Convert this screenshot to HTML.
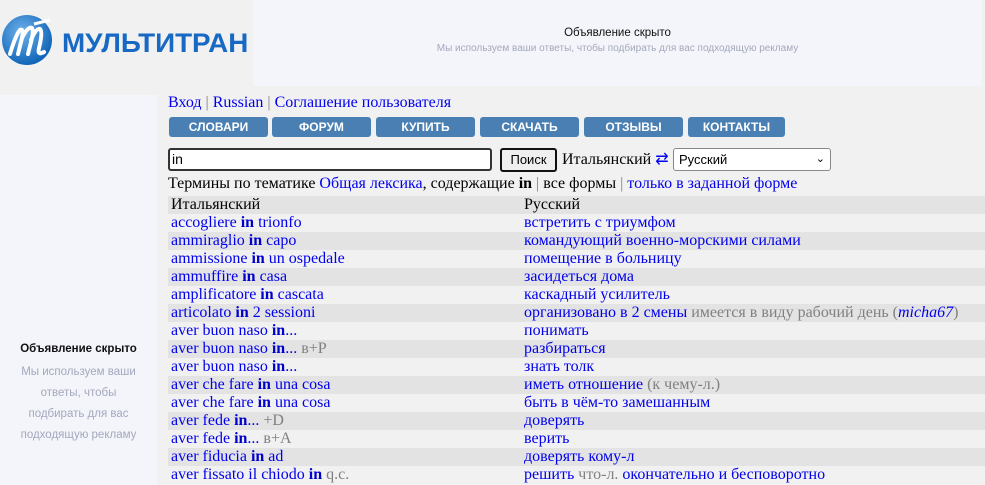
<!DOCTYPE html>
<html><head><meta charset="utf-8"><style>
body{margin:0;width:985px;height:485px;overflow:hidden;background:#f2f1f1;font-family:"Liberation Serif",serif;position:relative}
.abs{position:absolute}
a{color:#0000ee;text-decoration:none}
.ad{background:#f4f5fa;text-align:center;font-family:"Liberation Sans",sans-serif}
.btn{position:absolute;top:117px;height:20px;width:99px;background:#4a7fb3;border-radius:3px;color:#fff;font:bold 12px "Liberation Sans",sans-serif;text-align:center;line-height:20px}
table{border-collapse:collapse;position:absolute;left:168px;top:195px;width:817px;font-size:16px}
td{height:18px;padding:0 0 0 3px;line-height:18px;white-space:nowrap;color:#0000ee}
td:first-child{width:350px}
tr:nth-child(odd){background:#e3e3e3}
tr.h td{color:#000}
b{color:#0000cc}
.g{color:#808080}
</style></head><body>
<svg class="abs" style="left:0;top:12px" width="56" height="56" viewBox="0 0 56 56">
<defs><radialGradient id="rg" cx="40%" cy="35%" r="70%"><stop offset="0" stop-color="#6fb2ea"/><stop offset="1" stop-color="#0a5fb4"/></radialGradient></defs>
<circle cx="27" cy="28" r="25" fill="url(#rg)"/>
<path d="M10 42 Q16 22 20 18 Q24 16 22 26 L18 42 M22 26 Q28 14 32 16 Q34 20 30 34 L28 42 M31 28 Q36 16 40 17 Q43 20 39 36 Q37 44 44 40" stroke="#fff" stroke-width="4" fill="none" stroke-linecap="round"/>
<path d="M34 12 L50 8" stroke="#fff" stroke-width="3"/>
</svg>
<div class="abs" style="left:62px;top:28px;font:bold 27px 'Liberation Sans',sans-serif;color:#1769c4;transform:scaleX(1.03);transform-origin:left">МУЛЬТИТРАН</div>
<div class="abs ad" style="left:253px;top:0;width:729px;height:86px">
<div style="margin-top:27px;font-size:11.5px;color:#111">Объявление скрыто</div>
<div style="margin-top:4px;font-size:10px;color:#a3a8bd">Мы используем ваши ответы, чтобы подбирать для вас подходящую рекламу</div>
</div>
<div class="abs ad" style="left:0;top:95px;width:157px;height:390px">
<div style="margin-top:248px;font-size:11.5px;font-weight:bold;color:#111">Объявление скрыто</div>
<div style="margin:7px auto 0;width:125px;font-size:11.5px;line-height:21px;color:#a3a8bd">Мы используем ваши ответы, чтобы подбирать для вас подходящую рекламу</div>
</div>
<div class="abs" style="left:168px;top:94px;font-size:16px"><a>Вход</a> <span class="g">|</span> <a>Russian</a> <span class="g">|</span> <a>Соглашение пользователя</a></div>
<div class="btn" style="left:169px">СЛОВАРИ</div>
<div class="btn" style="left:272px">ФОРУМ</div>
<div class="btn" style="left:376px">КУПИТЬ</div>
<div class="btn" style="left:480px">СКАЧАТЬ</div>
<div class="btn" style="left:584px">ОТЗЫВЫ</div>
<div class="btn" style="left:688px;width:97px">КОНТАКТЫ</div>
<div class="abs" style="left:168px;top:148px;height:19px;border:2px solid #333;border-radius:3px;background:#fff;font:14px 'Liberation Sans',sans-serif;line-height:19px;padding-left:2px;width:318px">in</div>
<div class="abs" style="left:500px;top:148px;width:53px;height:20px;border:2px solid #111;border-radius:3px;background:#efefef;font:13px 'Liberation Sans',sans-serif;text-align:center;line-height:20px">Поиск</div>
<div class="abs" style="left:562px;top:149px;font-size:16px">Итальянский <span style="color:#0000ee">⇄</span></div>
<div class="abs" style="left:673px;top:148px;border:1px solid #888;border-radius:3px;background:#fff;font:13px 'Liberation Sans',sans-serif;line-height:21px;padding-left:5px;box-sizing:border-box;width:158px;height:23px">Русский<span style="position:absolute;right:5px;top:0;font-size:11px">&#x2304;</span></div>
<div class="abs" style="left:168px;top:175px;font-size:16px">Термины по тематике <a>Общая лексика</a>, содержащие <b style="color:#000">in</b> <span class="g">|</span> все формы <span class="g">|</span> <a>только в заданной форме</a></div>
<table style="top:196px">
<tr class="h"><td>Итальянский</td><td>Русский</td></tr>
<tr><td>accogliere <b>in</b> trionfo</td><td>встретить с триумфом</td></tr>
<tr><td>ammiraglio <b>in</b> capo</td><td>командующий военно-морскими силами</td></tr>
<tr><td>ammissione <b>in</b> un ospedale</td><td>помещение в больницу</td></tr>
<tr><td>ammuffire <b>in</b> casa</td><td>засидеться дома</td></tr>
<tr><td>amplificatore <b>in</b> cascata</td><td>каскадный усилитель</td></tr>
<tr><td>articolato <b>in</b> 2 sessioni</td><td>организовано в 2 смены <span class="g">имеется в виду рабочий день (<i style="color:#0000ee">micha67</i>)</span></td></tr>
<tr><td>aver buon naso <b>in</b>...</td><td>понимать</td></tr>
<tr><td>aver buon naso <b>in</b>... <span class="g">в+P</span></td><td>разбираться</td></tr>
<tr><td>aver buon naso <b>in</b>...</td><td>знать толк</td></tr>
<tr><td>aver che fare <b>in</b> una cosa</td><td>иметь отношение <span class="g">(к чему-л.)</span></td></tr>
<tr><td>aver che fare <b>in</b> una cosa</td><td>быть в чём-то замешанным</td></tr>
<tr><td>aver fede <b>in</b>... <span class="g">+D</span></td><td>доверять</td></tr>
<tr><td>aver fede <b>in</b>... <span class="g">в+A</span></td><td>верить</td></tr>
<tr><td>aver fiducia <b>in</b> ad</td><td>доверять кому-л</td></tr>
<tr><td>aver fissato il chiodo <b>in</b> <span class="g">q.c.</span></td><td>решить <span class="g">что-л.</span> окончательно и бесповоротно</td></tr>
</table>
</body></html>
